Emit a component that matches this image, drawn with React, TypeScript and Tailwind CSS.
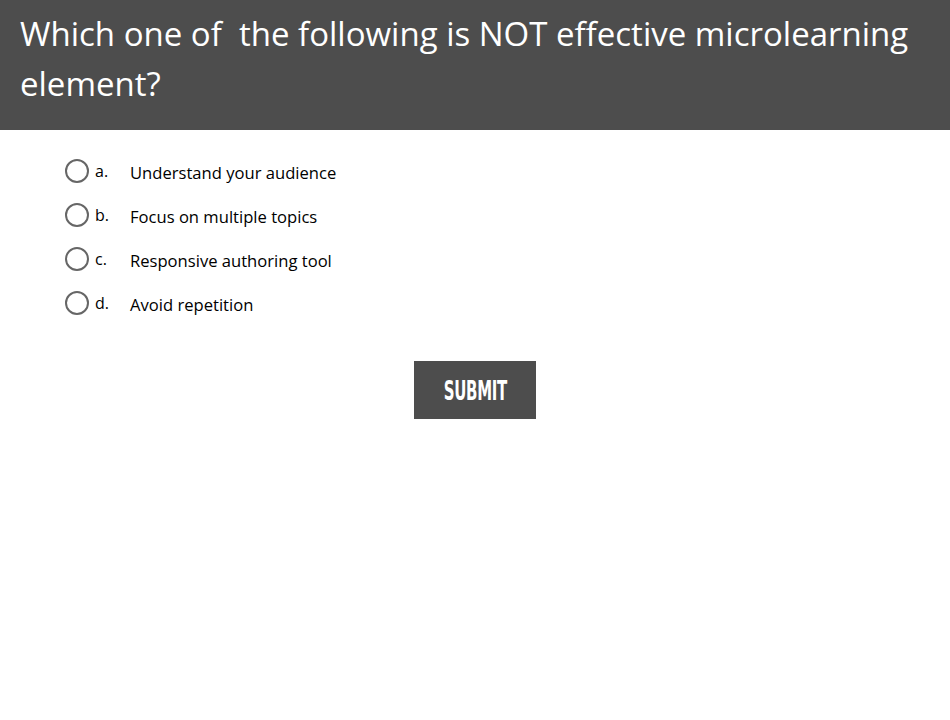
import React from 'react';

const options = [
  { key: 'a.', text: 'Understand your audience' },
  { key: 'b.', text: 'Focus on multiple topics' },
  { key: 'c.', text: 'Responsive authoring tool' },
  { key: 'd.', text: 'Avoid repetition' },
];

const App: React.FC = () => {
  return (
    <div className="w-[950px] h-[720px] bg-white font-['Open_Sans',sans-serif]">
      {/* Question header */}
      <div className="h-[130px] bg-[#4d4d4d] px-5 pt-[9px]">
        <h1 className="text-[33px] leading-[50px] text-white font-normal">
          Which one of&nbsp; the following is NOT effective microlearning element?
        </h1>
      </div>

      {/* Options */}
      <div className="flex flex-col pl-[65px] pt-[19px]">
        {options.map((o) => (
          <label key={o.key} className="flex items-center h-[44px] cursor-pointer">
            <span className="w-6 h-6 rounded-full border-2 border-[#666666] shrink-0"></span>
            <span className="w-[41px] pl-[6px] text-[16px] text-black -mt-[1px]">{o.key}</span>
            <span className="text-[16.6px] text-black mt-[4px]">{o.text}</span>
          </label>
        ))}
      </div>

      {/* Submit */}
      <div className="flex justify-center pt-[36px]">
        <button className="w-[122px] h-[58px] bg-[#4d4d4d] text-white flex items-center justify-center">
          <span className="inline-block font-['DejaVu_Sans_Condensed','DejaVu_Sans',sans-serif] font-bold text-[26px] scale-x-[0.64] tracking-[-0.5px] mt-[2px]">
            SUBMIT
          </span>
        </button>
      </div>
    </div>
  );
};

export default App;
